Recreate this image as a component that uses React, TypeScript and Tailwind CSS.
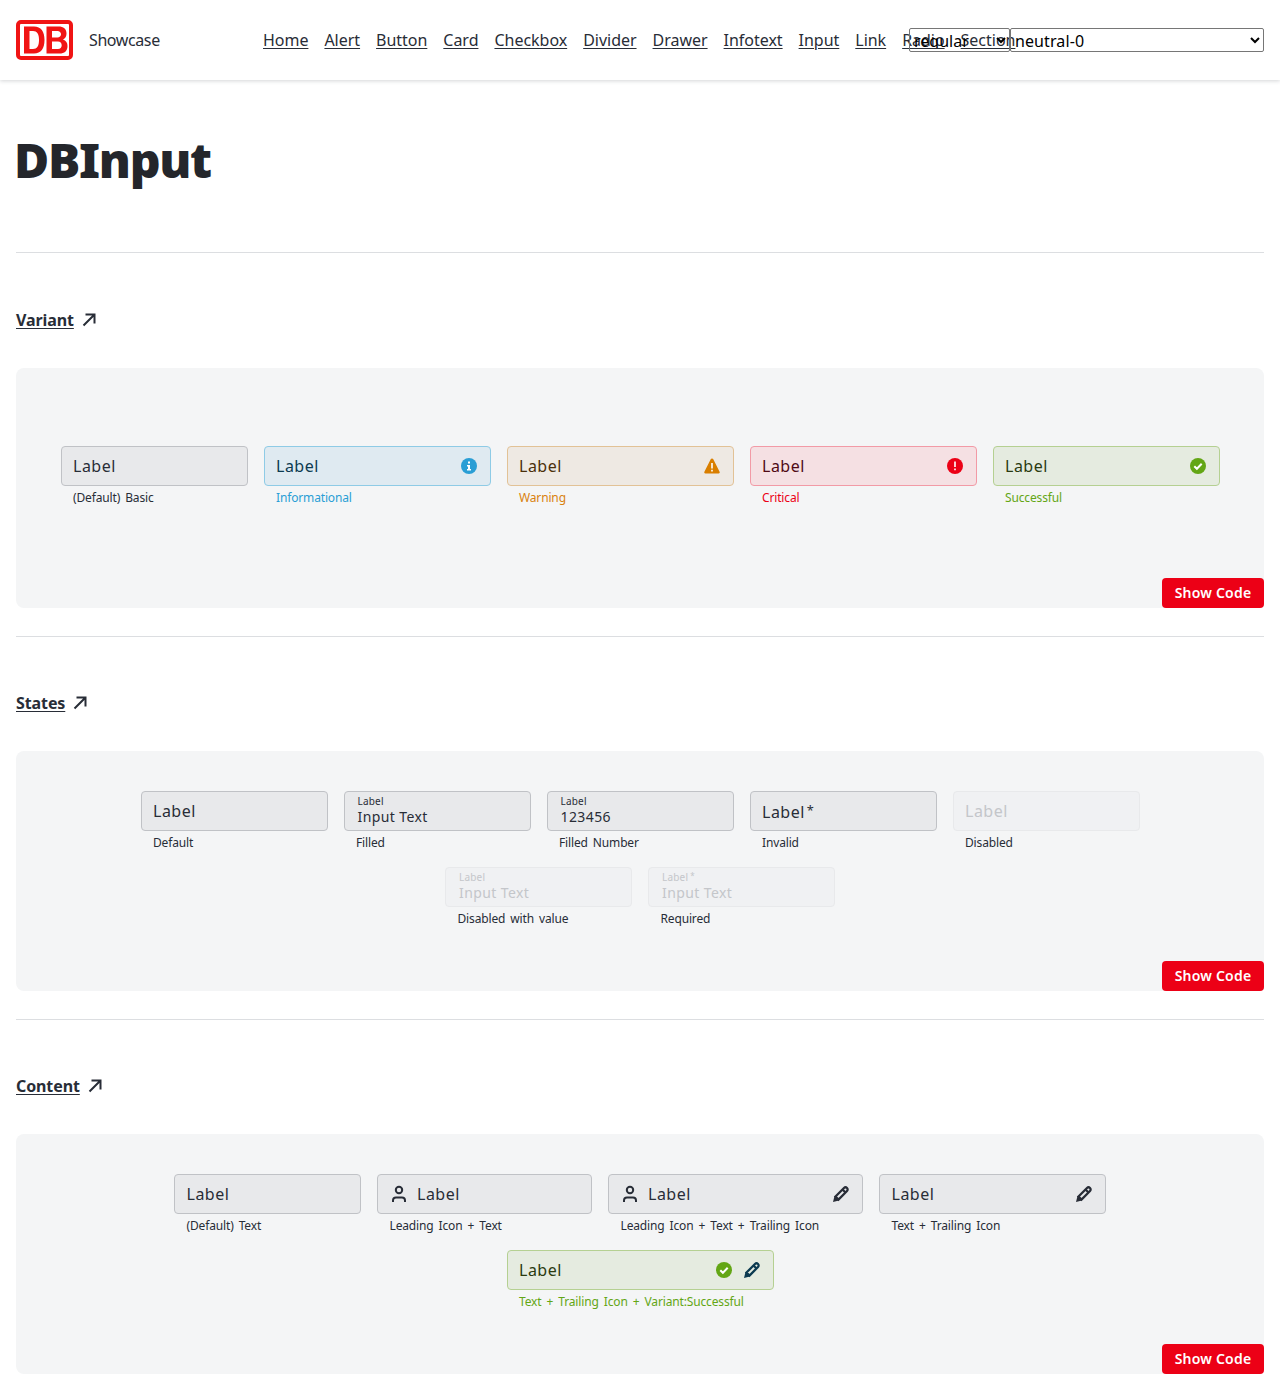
// App.tsx
import type { ReactNode } from 'react';

const navLinks = ['Home', 'Alert', 'Button', 'Card', 'Checkbox', 'Divider', 'Drawer', 'Infotext', 'Input', 'Link', 'Radio', 'Section'];

type Variant = 'basic' | 'info' | 'warning' | 'critical' | 'success';

const boxStyles: Record<Variant, string> = {
  basic: 'bg-[#e8e9eb] border-[#c0c2c6] text-[#282d37]',
  info: 'bg-[#dfeaf1] border-[#8ecbe6] text-[#0c3a50]',
  warning: 'bg-[#eee9e3] border-[#e2c296] text-[#4a2f0b]',
  critical: 'bg-[#f5e0e3] border-[#f29aa6] text-[#4f0a15]',
  success: 'bg-[#e5ebe0] border-[#b5d092] text-[#2a3a10]',
};

const messageStyles: Record<Variant, string> = {
  basic: 'text-[#282d37]',
  info: 'text-[#2a9ed5]',
  warning: 'text-[#d9820f]',
  critical: 'text-[#ec0016]',
  success: 'text-[#63a615]',
};

function DbLogo() {
  return (
    <svg width="57" height="40" viewBox="0 0 57 40" className="shrink-0">
      <rect x="2" y="2" width="53" height="36" rx="3" fill="#fff" stroke="#f01414" strokeWidth="4" />
      <path
        fillRule="evenodd"
        fill="#f01414"
        d="M8 6.500h10c7 0 10.500 5 10.500 13.500S25 33.500 18 33.500H8zM13.500 11v18h3.500c4 0 6-3 6-9s-2-9-6-9zM30.500 6.500h12c5 0 8 2.500 8 7 0 2.700-1.200 5-3.500 6 3 1 4.500 3.500 4.500 6.500 0 5-3 7.500-8 7.500H30.500zM36 11v6.500h5.500c2 0 3.500-1.200 3.500-3.200S43.500 11 41.500 11zM36 21.500V29h6c2.300 0 3.700-1.300 3.700-3.700s-1.400-3.800-3.700-3.800z"
      />
    </svg>
  );
}

function ArrowUpRight() {
  return (
    <svg width="24" height="24" viewBox="0 0 24 24" fill="none" stroke="#282d37" strokeWidth="2" className="shrink-0">
      <path d="M6.500 17.500L17 7M8.500 6.500h9v9" />
    </svg>
  );
}

function PersonIcon() {
  return (
    <svg width="24" height="24" viewBox="0 0 24 24" fill="none" stroke="#282d37" strokeWidth="2" className="shrink-0">
      <circle cx="12" cy="8" r="3.200" />
      <path d="M6 20v-1.500a3 3 0 0 1 3-3h6a3 3 0 0 1 3 3V20" />
    </svg>
  );
}

function PencilIcon({ color = '#282d37' }: { color?: string }) {
  return (
    <svg width="24" height="24" viewBox="0 0 24 24" className="shrink-0">
      <path d="M6.500 14.500L15 6a2.100 2.100 0 0 1 3 3l-8.500 8.500z" fill="none" stroke={color} strokeWidth="2.300" />
      <path d="M5.500 14l4.500 4.500L4 20z" fill={color} />
      <path d="M13.500 7.500l3 3" stroke={color} strokeWidth="2.300" />
    </svg>
  );
}

function StatusIcon({ variant }: { variant: Variant }) {
  if (variant === 'info') {
    return (
      <svg width="24" height="24" viewBox="0 0 24 24" className="shrink-0">
        <circle cx="12" cy="12" r="8" fill="#2a9ed5" />
        <path d="M11 7.500h2v2h-2zM10 11h3v4h1v1.500h-4V15h1v-2.500h-1z" fill="#fff" />
      </svg>
    );
  }
  if (variant === 'warning') {
    return (
      <svg width="24" height="24" viewBox="0 0 24 24" className="shrink-0">
        <path d="M12 4.500c.6 0 1 .3 1.300.8l6.300 12.500c.4.800 0 1.700-1 1.700H5.400c-1 0-1.400-.9-1-1.700l6.300-12.500c.3-.5.700-.8 1.300-.8z" fill="#d97f00" />
        <path d="M11.200 9h1.600v5.500h-1.600zM11.200 15.800h1.600v1.700h-1.600z" fill="#fff" />
      </svg>
    );
  }
  if (variant === 'critical') {
    return (
      <svg width="24" height="24" viewBox="0 0 24 24" className="shrink-0">
        <circle cx="12" cy="12" r="8" fill="#ec0016" />
        <path d="M11.200 7.500h1.600v5.500h-1.600zM11.200 14.500h1.600v1.800h-1.600z" fill="#fff" />
      </svg>
    );
  }
  return (
    <svg width="24" height="24" viewBox="0 0 24 24" className="shrink-0">
      <circle cx="12" cy="12" r="8" fill="#63a615" />
      <path d="M8.300 12.200l2.600 2.600 4.800-5" fill="none" stroke="#fff" strokeWidth="2" />
    </svg>
  );
}

interface FieldProps {
  width: string;
  message: string;
  variant?: Variant;
  value?: string;
  required?: boolean;
  disabled?: boolean;
  leading?: boolean;
  children?: ReactNode;
}

function Field({ width, message, variant = 'basic', value, required = false, disabled = false, leading = false, children }: FieldProps) {
  const box = disabled ? 'bg-[#f0f1f3] border-[#e8e9eb] text-[#c4c6ca]' : boxStyles[variant];
  const star = required && <span className="ml-[2px] text-[0.8em] align-[0.2em]">*</span>;

  return (
    <div className={`flex flex-col ${width}`}>
      <div className={`flex items-center h-10 border rounded-[4px] pl-[11.5px] pr-[9px] ${box}`}>
        {leading && <span className="mr-[6px] -ml-[2.5px] flex"><PersonIcon /></span>}
        {value ? (
          <div className="flex flex-col flex-1 min-w-0 pl-[1.5px]">
            <span className="text-[10px] leading-[12px] mt-[-1px] tracking-[0.2px]">Label{star}</span>
            <span className="text-[14px] leading-[20px] tracking-[0.4px]">{value}</span>
          </div>
        ) : (
          <span className="flex-1 text-[16px] leading-[24px] tracking-[0.5px]">Label{star}</span>
        )}
        {children}
      </div>
      <span className={`h-5 pl-[12.5px] pt-[3px] text-[12px] leading-[18px] whitespace-nowrap tracking-[-0.15px] [word-spacing:2.1px] ${messageStyles[variant]}`}>{message}</span>
    </div>
  );
}

function Section({ title, top, children }: { title: string; top: string; children: ReactNode }) {
  return (
    <section>
      <div className="h-px bg-[#dcdee1]" />
      <h2 className={`flex items-center gap-[3px] h-6 mb-9 text-[16px] font-bold tracking-[-0.1px] text-[#282d37] ${top}`}>
        <span className="underline underline-offset-2">{title}</span>
        <ArrowUpRight />
      </h2>
      {children}
    </section>
  );
}

function Card({ inner, children }: { inner: string; children: ReactNode }) {
  return (
    <div className="flex flex-col h-60 bg-[#f4f5f6] rounded-lg">
      <div className={`flex flex-1 flex-wrap content-start justify-center gap-4 ${inner}`}>{children}</div>
      <button className="self-end h-[30px] w-[102px] pb-px rounded-[4px] bg-[#ec0016] text-white text-[14px] font-semibold tracking-[0.2px]">
        Show Code
      </button>
    </div>
  );
}

export default function App() {
  return (
    <div className="min-h-[1390px] bg-white text-[#282d37] font-['Noto_Sans',sans-serif]">
      <header className="flex items-center h-20 pl-4 pr-4 bg-white shadow-[0_1px_4px_rgba(40,45,55,0.2)]">
        <DbLogo />
        <span className="ml-4 w-[174px] shrink-0 text-[16px] tracking-[-0.4px]">Showcase</span>
        <nav className="flex flex-1 min-w-0 gap-4 whitespace-nowrap text-[16px] tracking-[-0.025px]">
          {navLinks.map((link) => (
            <a key={link} href="#" className="underline underline-offset-2">{link}</a>
          ))}
        </nav>
        <select defaultValue="regular" className="shrink-0 w-[101px] h-6 pb-[3px] text-[16px] text-black border border-[#767676] rounded-[2px]">
          <option>regular</option>
        </select>
        <select defaultValue="neutral-0" className="shrink-0 w-[254px] h-6 pb-[3px] text-[16px] tracking-[0.1px] text-black border border-[#767676] rounded-[2px]">
          <option>neutral-0</option>
        </select>
      </header>

      <main className="px-4 pb-4">
        <h1 className="mt-[56px] mb-[68px] -ml-[2px] h-12 text-[48px] leading-[48px] font-black tracking-[-1.3px] text-[#24262b]">DBInput</h1>

        <Section title="Variant" top="mt-[55px]">
          <Card inner="pt-[78px]">
            <Field width="w-[187px]" message="(Default) Basic" />
            <Field width="w-[227px]" message="Informational" variant="info"><StatusIcon variant="info" /></Field>
            <Field width="w-[227px]" message="Warning" variant="warning"><StatusIcon variant="warning" /></Field>
            <Field width="w-[227px]" message="Critical" variant="critical"><StatusIcon variant="critical" /></Field>
            <Field width="w-[227px]" message="Successful" variant="success"><StatusIcon variant="success" /></Field>
          </Card>
        </Section>

        <div className="h-7" />

        <Section title="States" top="mt-[54px]">
          <Card inner="pt-10 px-[124px]">
            <Field width="w-[187px]" message="Default" />
            <Field width="w-[187px]" message="Filled" value="Input Text" />
            <Field width="w-[187px]" message="Filled Number" value="123456" />
            <Field width="w-[187px]" message="Invalid" required />
            <Field width="w-[187px]" message="Disabled" disabled />
            <Field width="w-[187px]" message="Disabled with value" value="Input Text" disabled />
            <Field width="w-[187px]" message="Required" value="Input Text" required disabled />
          </Card>
        </Section>

        <div className="h-7" />

        <Section title="Content" top="mt-[54px]">
          <Card inner="pt-10 px-[124px]">
            <Field width="w-[187px]" message="(Default) Text" />
            <Field width="w-[215px]" message="Leading Icon + Text" leading />
            <Field width="w-[255px]" message="Leading Icon + Text + Trailing Icon" leading><PencilIcon /></Field>
            <Field width="w-[227px]" message="Text + Trailing Icon"><PencilIcon /></Field>
            <Field width="w-[267px]" message="Text + Trailing Icon + Variant:Successful" variant="success">
              <span className="flex gap-1">
                <StatusIcon variant="success" />
                <PencilIcon color="#0c3a50" />
              </span>
            </Field>
          </Card>
        </Section>
      </main>
    </div>
  );
}
